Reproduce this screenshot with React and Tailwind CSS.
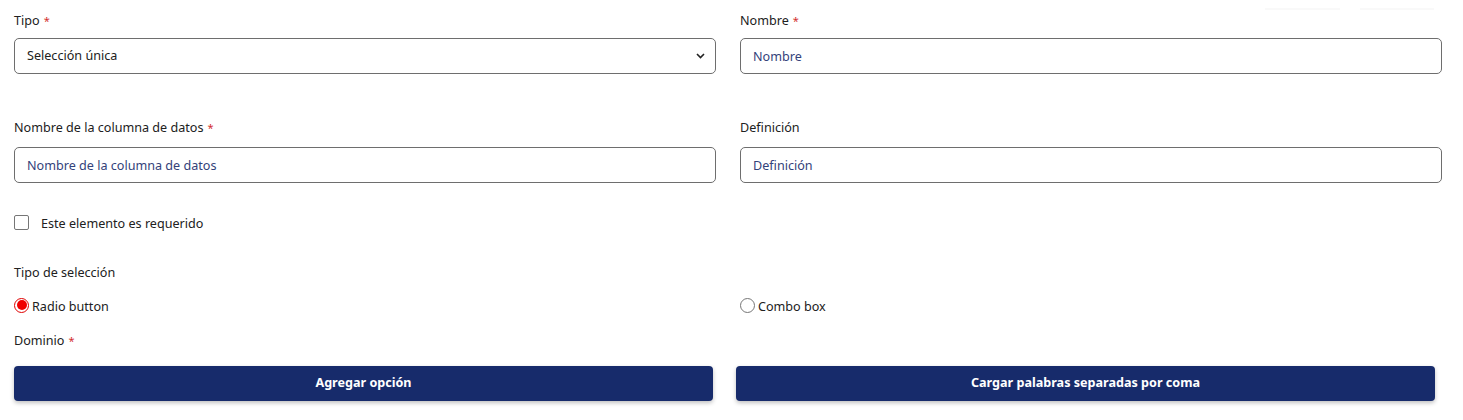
import { useState } from 'react';

const font = { fontFamily: '"Noto Sans", "Open Sans", sans-serif' };

const Label = ({ children, required }) => (
  <div className="text-[12.6px] leading-[20px] text-[#212121]">
    {children}
    {required && <span className="text-[#d32f2f] text-[11px] ml-[4px]">*</span>}
  </div>
);

const TextInput = ({ placeholder, gap }) => (
  <input
    placeholder={placeholder}
    className={`${gap} w-full h-[36px] rounded-[5px] border border-[#6e6e6e] px-3 text-[12.6px] text-[#212121] placeholder:text-[#33427a] outline-none`}
  />
);

export default function App() {
  const [tipoSel, setTipoSel] = useState('radio');
  const [req, setReq] = useState(false);

  return (
    <div className="bg-white w-[1463px] h-[420px] pl-[14px] pr-[21px] relative" style={font}>
      {/* faint tab remnants top right */}
      <div className="absolute top-[8px] left-[1265px] w-[75px] h-[2px] bg-[#f9f9f9]" />
      <div className="absolute top-[8px] left-[1360px] w-[74px] h-[2px] bg-[#f9f9f9]" />

      <div className="grid grid-cols-2 gap-x-[24px] pt-[11px]">
        <div>
          <Label required>Tipo</Label>
          <div className="relative mt-[7px] h-[36px] rounded-[5px] border border-[#6e6e6e] flex items-center px-3 text-[12.6px] text-[#212121]">
            Selección única
            <svg className="absolute right-[10px] top-[14px]" width="9" height="6" viewBox="0 0 9 6">
              <path d="M1 1l3.5 3.5L8 1" fill="none" stroke="#222" strokeWidth="1.6" />
            </svg>
          </div>
        </div>
        <div>
          <Label required>Nombre</Label>
          <TextInput placeholder="Nombre" gap="mt-[7px]" />
        </div>

        <div className="mt-[44px]">
          <Label required>Nombre de la columna de datos</Label>
          <TextInput placeholder="Nombre de la columna de datos" gap="mt-[9px]" />
        </div>
        <div className="mt-[44px]">
          <Label>Definición</Label>
          <TextInput placeholder="Definición" gap="mt-[9px]" />
        </div>
      </div>

      <label className="mt-[31px] flex items-center gap-[12px] text-[12.6px] leading-[20px] text-[#212121] w-fit">
        <span
          onClick={() => setReq(!req)}
          className="w-[15px] h-[15px] rounded-[2px] border border-[#767676] bg-white -mt-[4px]"
        />
        Este elemento es requerido
      </label>

      <div className="mt-[29px]">
        <Label>Tipo de selección</Label>
      </div>

      <div className="grid grid-cols-2 gap-x-[24px] mt-[14px] text-[12.6px] leading-[20px] text-[#212121]">
        <div className="flex items-center gap-[3px] cursor-pointer" onClick={() => setTipoSel('radio')}>
          <span className={`w-[15px] h-[15px] rounded-full flex items-center justify-center -mt-[4px] ${tipoSel === 'radio' ? 'border border-[#e00000]' : 'border border-[#767676]'}`}>
            {tipoSel === 'radio' && <span className="w-[10px] h-[10px] rounded-full bg-[#f00000]" />}
          </span>
          Radio button
        </div>
        <div className="flex items-center gap-[3px] cursor-pointer" onClick={() => setTipoSel('combo')}>
          <span className={`w-[15px] h-[15px] rounded-full flex items-center justify-center -mt-[4px] ${tipoSel === 'combo' ? 'border border-[#e00000]' : 'border border-[#767676]'}`}>
            {tipoSel === 'combo' && <span className="w-[10px] h-[10px] rounded-full bg-[#f00000]" />}
          </span>
          Combo box
        </div>
      </div>

      <div className="mt-[14px]">
        <Label required>Dominio</Label>
      </div>

      <div className="flex gap-[23px] mt-[15px] pr-[7px]">
        <button className="flex-1 h-[35px] rounded-[4px] bg-[#172b6b] text-white text-[12.6px] font-bold shadow-[0_2px_4px_rgba(0,0,0,0.25)]">
          Agregar opción
        </button>
        <button className="flex-1 h-[35px] rounded-[4px] bg-[#172b6b] text-white text-[12.6px] font-bold shadow-[0_2px_4px_rgba(0,0,0,0.25)]">
          Cargar palabras separadas por coma
        </button>
      </div>
    </div>
  );
}
